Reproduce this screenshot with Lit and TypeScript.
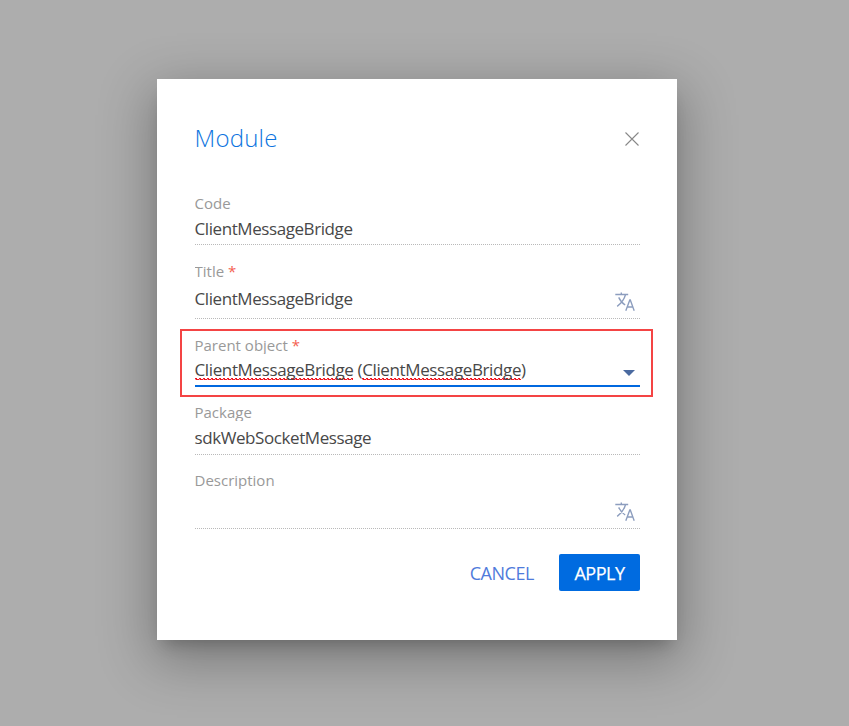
import { LitElement, html, css, svg, nothing } from "lit";
import { customElement, property } from "lit/decorators.js";
import { classMap } from "lit/directives/class-map.js";

@customElement("form-field")
class FormField extends LitElement {
  @property() label = "";
  @property() value = "";
  @property({ type: Boolean }) required = false;
  @property({ type: Boolean }) localizable = false;
  @property({ type: Boolean }) lookup = false;

  static styles = css`
    :host { display: block; height: 51px; }
    :host([localizable]) { height: 57px; }
    .field {
      box-sizing: border-box;
      height: 100%;
      display: flex;
      flex-direction: column;
      background:
        repeating-linear-gradient(90deg, #b9b9b9 0 1px, #fff 1px 2px) bottom / 100% 1px no-repeat;
    }
    .focused { background: none; border-bottom: 2px solid #0068df; }
    .label {
      height: 18px;
      line-height: 18px;
      overflow: hidden;
      font-size: 15px;
      color: #999;
      white-space: nowrap;
    }
    .star { color: #f4604f; }
    .row {
      display: flex;
      flex: 1;
      align-items: flex-start;
      justify-content: space-between;
    }
    .tall .row { align-items: flex-end; }
    .value {
      font-size: 17px;
      letter-spacing: -0.42px;
      line-height: 22px;
      margin-top: 6px;
      color: #484848;
      white-space: pre;
    }
    .tall .value { margin-bottom: 9px; }
    .focused .value { margin-top: 5px; letter-spacing: -0.37px; }
    .misspelt {
      background:
        repeating-linear-gradient(90deg, #f01520 0 2px, #fff0 2px 4px) 0 19px / 100% 1px no-repeat,
        repeating-linear-gradient(90deg, #f7a0a0 0 1px, #f01520 1px 4px) 0 20px / 100% 1px no-repeat;
      display: inline-block;
    }
    .icon { width: 20px; height: 19px; margin: 0 5px 8px 0; }
    .arrow { width: 12px; height: 6px; margin: 16px 5px 0 0; }
  `;

  private text() {
    if (!this.lookup) return this.value;
    return this.value
      .split(/([()]| )/)
      .map((part) => (/\w/.test(part) ? html`<span class="misspelt">${part}</span>` : part));
  }

  render() {
    return html`<div class=${classMap({ field: true, tall: this.localizable, focused: this.lookup })}>
      <div class="label">${this.label}${this.required ? html` <span class="star">*</span>` : nothing}</div>
      <div class="row">
        <div class="value">${this.text()}</div>
        ${this.localizable
          ? html`<svg class="icon" viewBox="0 0 20 19" fill="none" stroke="#8c9dbe" stroke-width="1.35">
              ${svg`<path d="M0.3 2.5H13.2M6.3 0.6V2.5M10.5 2.8C9.3 7 6 11.5 2.2 14.4M3.7 5.4C5.2 8.7 7.6 11.5 10.2 13"/>
              <path d="M10.8 18.7L14.8 8H15.3L19.2 18.7M12.2 15H17.8"/>`}
            </svg>`
          : nothing}
        ${this.lookup
          ? html`<svg class="arrow" viewBox="0 0 12 6"><path d="M0 0H12L6 6Z" fill="#4a6aa0" /></svg>`
          : nothing}
      </div>
    </div>`;
  }
}

@customElement("app-root")
class AppRoot extends LitElement {
  static styles = css`
    :host {
      box-sizing: border-box;
      display: block;
      height: 726px;
      padding: 79px 0 0 157px;
      overflow: hidden;
      background: #adadad;
      font-family: "Open Sans", "Noto Sans", sans-serif;
    }
    .dialog {
      box-sizing: border-box;
      width: 520px;
      height: 561px;
      padding: 42px 37px 0 37.5px;
      background: #fff;
      box-shadow: 0 11px 15px -7px rgba(0, 0, 0, 0.2), 0 16px 50px 5px rgba(0, 0, 0, 0.3);
    }
    .head {
      display: flex;
      justify-content: space-between;
      height: 73px;
    }
    .title {
      margin: 0;
      font-size: 24px;
      font-weight: 300;
      line-height: 34px;
      letter-spacing: 0.2px;
      color: #0d74e0;
    }
    .close { width: 14px; height: 14px; margin: 11px 1px 0 0; }
    .form { display: flex; flex-direction: column; gap: 17px; }
    .highlight {
      box-sizing: border-box;
      height: 68px;
      margin: -7px -13px -11px -14.5px;
      padding: 5px 11px 0 12.5px;
      border: 2px solid #f44444;
    }
    .package { height: 52px; }
    .description[localizable] { height: 58px; margin-top: -1px; }
    .actions {
      display: flex;
      justify-content: flex-end;
      align-items: center;
      gap: 10px;
      margin-top: 25px;
    }
    button {
      height: 37px;
      padding: 0 15px;
      border: 0;
      border-radius: 2px;
      font: 18px "Open Sans", sans-serif;
      letter-spacing: -0.45px;
      background: none;
      color: #4f7bdb;
    }
    .apply { width: 81px; background: #006be0; color: #fff; -webkit-text-stroke: 0.25px #fff; }
  `;

  render() {
    return html`<div class="dialog" role="dialog">
      <div class="head">
        <h1 class="title">Module</h1>
        <svg class="close" viewBox="0 0 14 14"><path d="M.5 .5L13.5 13.5M13.5 .5L.5 13.5" stroke="#888" stroke-width="1.1" /></svg>
      </div>
      <div class="form">
        <form-field label="Code" value="ClientMessageBridge"></form-field>
        <form-field label="Title" value="ClientMessageBridge" required localizable></form-field>
        <div class="highlight">
          <form-field label="Parent object" value="ClientMessageBridge (ClientMessageBridge)" required lookup></form-field>
        </div>
        <form-field class="package" label="Package" value="sdkWebSocketMessage"></form-field>
        <form-field class="description" label="Description" localizable></form-field>
      </div>
      <div class="actions">
        <button class="cancel">CANCEL</button>
        <button class="apply">APPLY</button>
      </div>
    </div>`;
  }
}
